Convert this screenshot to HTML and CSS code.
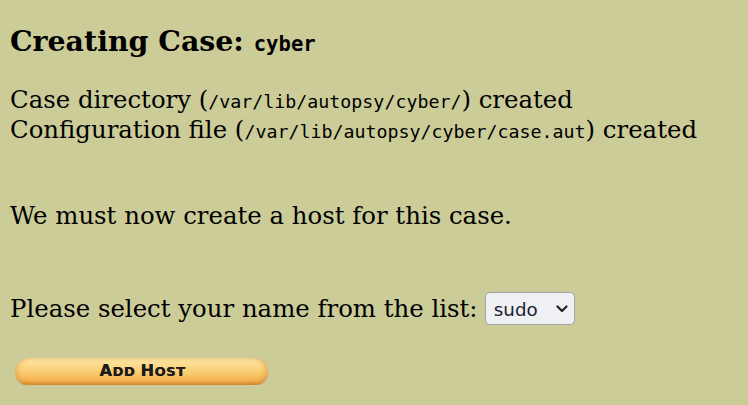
FILE: index.html
```html
<!DOCTYPE html>
<html>
<head>
<meta charset="utf-8">
<link rel="stylesheet" href="styles.css">
</head>
<body>
<h3 class="title">Creating Case: <tt class="case">cyber</tt></h3>
<p class="info">Case directory (<tt class="path">/var/lib/autopsy/cyber/</tt>) created<br>
Configuration file (<tt class="path">/var/lib/autopsy/cyber/case.aut</tt>) created</p>
<p class="msg msg-host">We must now create a host for this case.</p>
<p class="msg msg-select">Please select your name from the list: <span class="selectwrap"><select class="names"><option>sudo</option></select><svg class="chev" width="12" height="8" viewBox="0 0 12 8"><path d="M1.5 1.5 L6 6 L10.5 1.5" fill="none" stroke="#222" stroke-width="2.2" stroke-linecap="round" stroke-linejoin="round"/></svg></span></p>
<div class="btnrow"><button class="addhost"><span class="cap">A</span><span class="sc">dd</span> <span class="cap">H</span><span class="sc">ost</span></button></div>
</body>
</html>
```
FILE: styles.css
```css
html, body {
  margin: 0;
  padding: 0;
}
body {
  background: #cccc99;
  color: #000;
  font-family: "DejaVu Serif", serif;
  font-size: 24.4px;
  padding: 0 10px;
}
.title {
  font-size: 28.4px;
  line-height: 33px;
  font-weight: bold;
  margin: 24.7px 0 0;
}
.case {
  font-family: "DejaVu Sans Mono", monospace;
  font-size: 20.6px;
  line-height: 20px;
}
.info {
  margin: 27.6px 0 0;
  line-height: 29.3px;
}
.path {
  font-family: "DejaVu Sans Mono", monospace;
  font-size: 18.3px;
  line-height: 18px;
}
.msg {
  margin: 0;
}
.msg-host {
  margin-top: 58.5px;
  line-height: 28.4px;
}
.msg-select {
  margin-top: 61.3px;
  line-height: 34px;
}
.selectwrap {
  position: relative;
  display: inline-block;
  vertical-align: top;
  height: 33.4px;
  line-height: 20px;
}
.names {
  -webkit-appearance: none;
  appearance: none;
  box-sizing: border-box;
  display: block;
  font-family: "DejaVu Sans", sans-serif;
  font-size: 18.3px;
  color: #1e2230;
  width: 89.5px;
  height: 33.4px;
  border: 1.5px solid #a4a4a8;
  border-radius: 5px;
  background: #eff0f4;
  padding: 2px 0 0 7.5px;
  margin: 0;
}
.chev {
  position: absolute;
  right: 7px;
  top: 13px;
  pointer-events: none;
}
.btnrow {
  margin-top: 31.7px;
  padding-left: 5px;
}
.addhost {
  display: block;
  width: 253px;
  height: 27px;
  border: none;
  border-radius: 14px;
  background: linear-gradient(#fde8ad 0%, #fcd888 30%, #f9c86a 60%, #f2b04e 85%, #d98c2c 100%);
  box-shadow: inset -3px 0 4px rgba(200, 120, 30, 0.35), inset 3px 0 4px rgba(200, 120, 30, 0.25), 0 1px 1px rgba(140, 90, 30, 0.35);
  font-family: "DejaVu Sans", sans-serif;
  font-weight: bold;
  color: #1c1c1c;
  padding: 0 0 1px 2px;
  line-height: 26px;
  letter-spacing: 0.6px;
  text-shadow: 0.4px 0 0 #1c1c1c;
}
.cap {
  font-size: 16px;
}
.sc {
  font-size: 13px;
  text-transform: uppercase;
}
```
